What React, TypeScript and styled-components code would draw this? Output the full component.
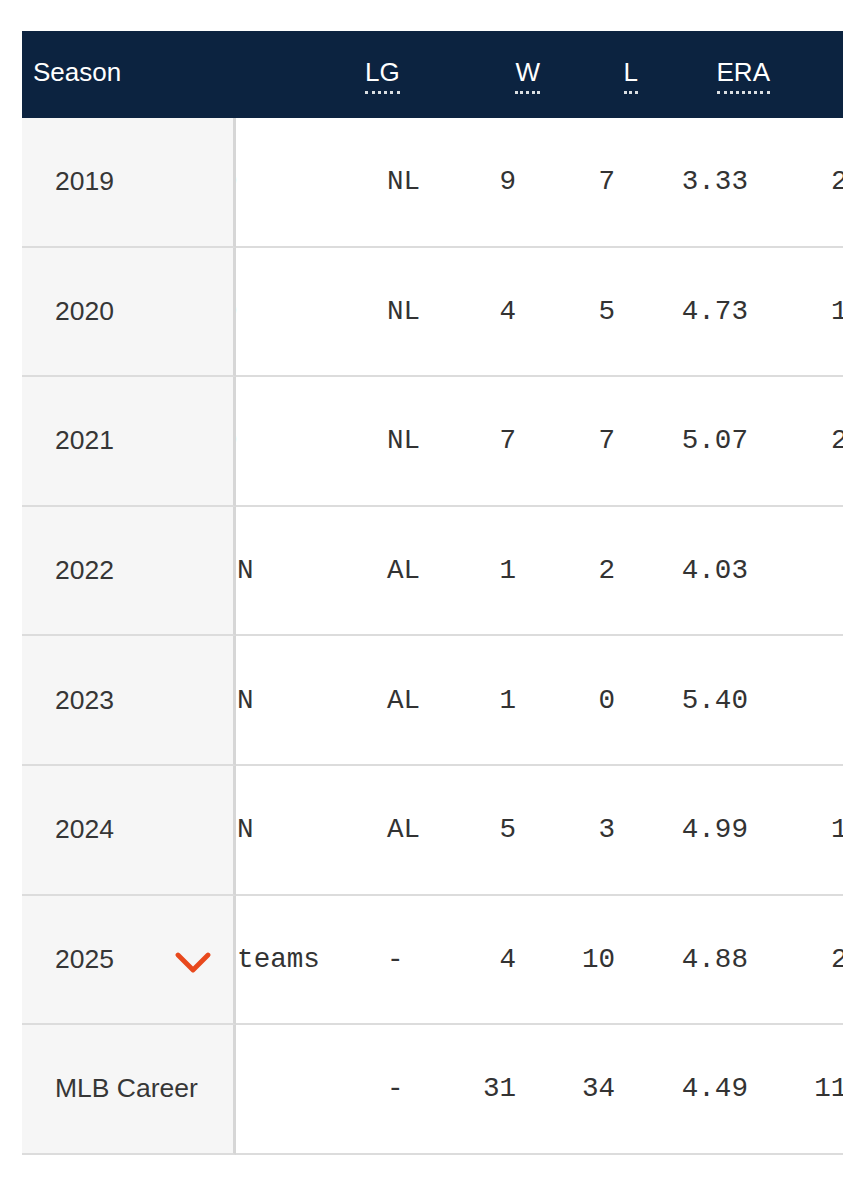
import React, { useLayoutEffect, useRef } from 'react'

import { createGlobalStyle, styled } from 'styled-components'

const GlobalStyle = createGlobalStyle`
  body {
    margin: 0;
    background: #ffffff;
    font-family: "Liberation Sans", Arial, sans-serif;
  }
`

const Page = styled.div`
  padding: 31px 22px 40px;
`

const Scroller = styled.div`
  width: 821px;
  overflow-x: auto;
  scrollbar-width: none;
  &::-webkit-scrollbar {
    display: none;
  }
`

const Table = styled.table`
  border-collapse: separate;
  border-spacing: 0;
  table-layout: fixed;
`

const HeadCell = styled.th<{ $width: number; $align: 'left' | 'right'; $pad: number }>`
  width: ${p => p.$width}px;
  min-width: ${p => p.$width}px;
  height: 87px;
  padding: 0 0 6px;
  padding-${p => p.$align}: ${p => p.$pad}px;
  box-sizing: border-box;
  background: #0c2340;
  color: #ffffff;
  font-family: "Liberation Sans", Arial, sans-serif;
  font-size: 26px;
  font-weight: 400;
  line-height: 30px;
  text-align: ${p => p.$align};
  vertical-align: middle;
  white-space: nowrap;
`

const SeasonHead = styled(HeadCell)`
  position: sticky;
  left: 0;
  z-index: 2;
  border-right: 3px solid #0c2340;
`

const Abbr = styled.abbr`
  display: inline-block;
  line-height: 28px;
  text-decoration: none;
  border-bottom: 3px dotted rgba(255, 255, 255, 0.85);
  padding-bottom: 5px;
  margin-bottom: -9px;
  cursor: help;
`

const SeasonCell = styled.td`
  position: sticky;
  left: 0;
  z-index: 1;
  height: 129.6px;
  padding: 0 0 0 33px;
  box-sizing: border-box;
  background: #f6f6f6;
  border-right: 3px solid #d6d6d6;
  border-bottom: 2px solid #dcdcdc;
  color: #363636;
  font-family: "Liberation Sans", Arial, sans-serif;
  font-size: 26.5px;
  white-space: nowrap;
  vertical-align: middle;
`

const SeasonInner = styled.div`
  display: flex;
  align-items: center;
  justify-content: space-between;
  padding-right: 22px;
`

const StatCell = styled.td<{ $align: 'left' | 'right'; $pad: number }>`
  height: 129.6px;
  padding: 0;
  padding-${p => p.$align}: ${p => p.$pad}px;
  box-sizing: border-box;
  border-bottom: 2px solid #dcdcdc;
  color: #333333;
  font-family: "Liberation Mono", "DejaVu Sans Mono", monospace;
  font-size: 27.6px;
  text-align: ${p => p.$align};
  vertical-align: middle;
  white-space: nowrap;
  overflow: hidden;
`

const ChevronMark = styled.svg`
  margin-top: 8px;
  flex: none;
`

const Chevron = () => (
  <ChevronMark width="36" height="22" viewBox="0 0 36 22" aria-hidden="true">
    <path
      d="M3 3 L18 18 L33 3"
      fill="none"
      stroke="#e8491d"
      strokeWidth="4.8"
      strokeLinecap="round"
      strokeLinejoin="round"
    />
  </ChevronMark>
)

type Column = {
  key: string
  label: string
  abbr: boolean
  width: number
  align: 'left' | 'right'
  pad: number
  headPad: number
}

const columns: Column[] = [
  { key: 'team', label: '', abbr: false, width: 148, align: 'left', pad: 12, headPad: 12 },
  { key: 'lg', label: 'LG', abbr: true, width: 100, align: 'left', pad: 47, headPad: 25 },
  { key: 'w', label: 'W', abbr: true, width: 100, align: 'right', pad: 24, headPad: 0 },
  { key: 'l', label: 'L', abbr: true, width: 100, align: 'right', pad: 25, headPad: 2 },
  { key: 'era', label: 'ERA', abbr: true, width: 130, align: 'right', pad: 22, headPad: 0 },
  { key: 'g', label: 'G', abbr: true, width: 100, align: 'right', pad: 6, headPad: 0 },
  { key: 'gs', label: 'GS', abbr: true, width: 100, align: 'right', pad: 24, headPad: 0 },
  { key: 'sv', label: 'SV', abbr: true, width: 100, align: 'right', pad: 24, headPad: 0 },
  { key: 'ip', label: 'IP', abbr: true, width: 130, align: 'right', pad: 24, headPad: 0 },
]

type Row = { season: string; expand?: boolean; stats: Record<string, string> }

const rows: Row[] = [
  { season: '2019', stats: { team: 'SD', lg: 'NL', w: '9', l: '7', era: '3.33', g: '26', gs: '26', sv: '0', ip: '140.2' } },
  { season: '2020', stats: { team: 'SD', lg: 'NL', w: '4', l: '5', era: '4.73', g: '12', gs: '12', sv: '0', ip: '59.0' } },
  { season: '2021', stats: { team: 'SD', lg: 'NL', w: '7', l: '7', era: '5.07', g: '23', gs: '22', sv: '0', ip: '108.2' } },
  { season: '2022', stats: { team: 'MIN', lg: 'AL', w: '1', l: '2', era: '4.03', g: '5', gs: '5', sv: '0', ip: '22.1' } },
  { season: '2023', stats: { team: 'MIN', lg: 'AL', w: '1', l: '0', era: '5.40', g: '5', gs: '0', sv: '0', ip: '10.0' } },
  { season: '2024', stats: { team: 'MIN', lg: 'AL', w: '5', l: '3', era: '4.99', g: '17', gs: '17', sv: '0', ip: '88.1' } },
  { season: '2025', expand: true, stats: { team: '2 teams', lg: '-', w: '4', l: '10', era: '4.88', g: '29', gs: '28', sv: '0', ip: '158.2' } },
  { season: 'MLB Career', stats: { team: '', lg: '-', w: '31', l: '34', era: '4.49', g: '117', gs: '110', sv: '0', ip: '587.2' } },
]

// the table sits scrolled a little to the right, as in the capture
const SCROLL_LEFT = 44

export default function App() {
  const scroller = useRef<HTMLDivElement>(null)

  useLayoutEffect(() => {
    if (scroller.current) scroller.current.scrollLeft = SCROLL_LEFT
  }, [])

  return (
    <Page>
      <GlobalStyle />
      <Scroller ref={scroller}>
        <Table>
          <thead>
            <tr>
              <SeasonHead $width={214} $align="left" $pad={11}>Season</SeasonHead>
              {columns.map(col => (
                <HeadCell key={col.key} $width={col.width} $align={col.align} $pad={col.headPad}>
                  {col.abbr ? <Abbr>{col.label}</Abbr> : col.label}
                </HeadCell>
              ))}
            </tr>
          </thead>
          <tbody>
            {rows.map(row => (
              <tr key={row.season}>
                <SeasonCell>
                  <SeasonInner>
                    <span>{row.season}</span>
                    {row.expand && <Chevron />}
                  </SeasonInner>
                </SeasonCell>
                {columns.map(col => (
                  <StatCell key={col.key} $align={col.align} $pad={col.pad}>
                    {row.stats[col.key]}
                  </StatCell>
                ))}
              </tr>
            ))}
          </tbody>
        </Table>
      </Scroller>
    </Page>
  )
}
